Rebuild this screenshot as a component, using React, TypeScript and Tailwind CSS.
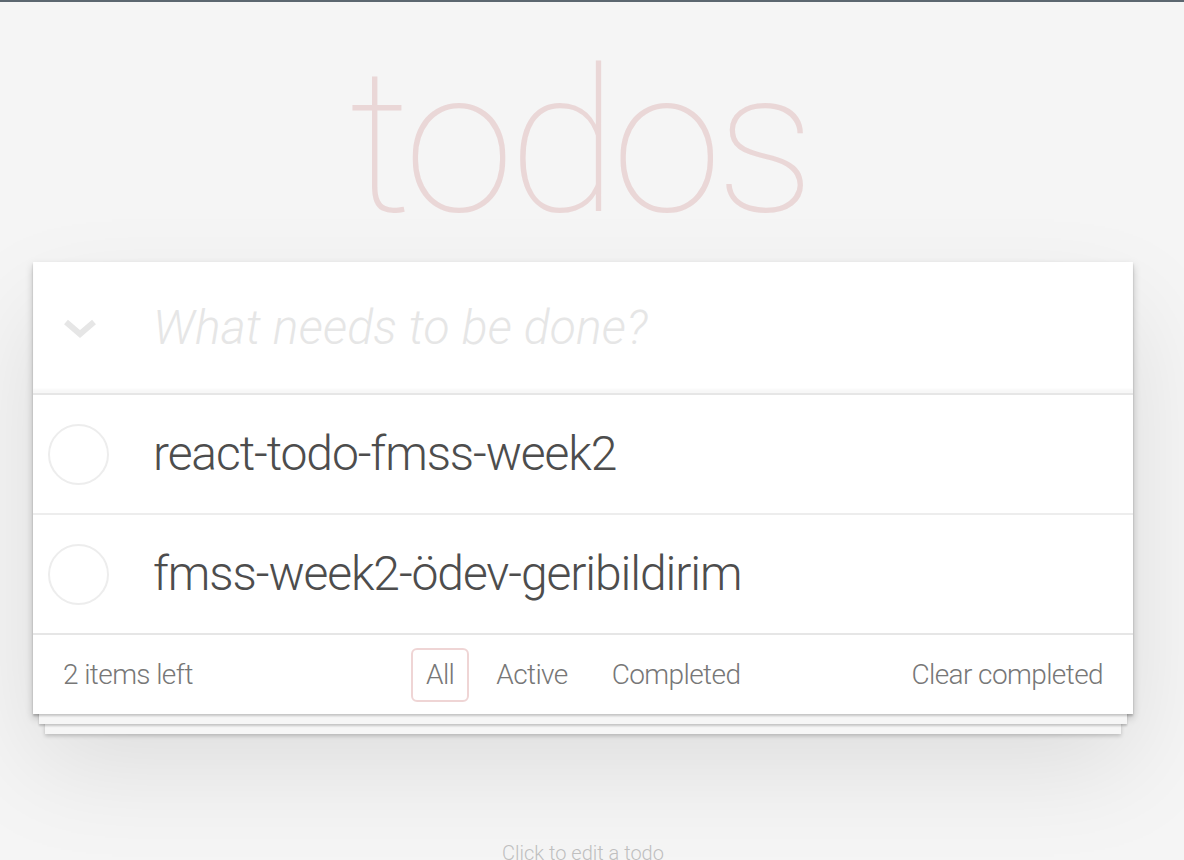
const todos = ["react-todo-fmss-week2", "fmss-week2-ödev-geribildirim"];

const font = "font-['Roboto','Helvetica_Neue',Helvetica,Arial,sans-serif]";

function Chevron() {
  return (
    <svg width="34" height="24" viewBox="0 0 34 24" className="block">
      <polyline
        points="3,5 17,17 31,5"
        fill="none"
        stroke="#e6e6e6"
        strokeWidth="6"
        strokeLinecap="butt"
        strokeLinejoin="miter"
      />
    </svg>
  );
}

export default function App() {
  return (
    <div className={`min-h-screen bg-[#f5f5f5] border-t-2 border-[#5c6770] ${font}`}>
      <div className="ml-[33px] w-[1100px] pt-[41px]">
        <h1 className="h-[200px] mb-[19px] text-center text-[200px] leading-[200px] font-thin tracking-[-6px] text-[rgba(175,47,47,0.15)] pr-[8px]">
          todos
        </h1>

        <section className="bg-white shadow-[0_2px_2px_rgba(0,0,0,0.2),0_16px_0_-6px_#f6f6f6,0_18px_2px_-6px_rgba(0,0,0,0.2),0_32px_0_-12px_#f6f6f6,0_34px_4px_-12px_rgba(0,0,0,0.2),0_4px_8px_0_rgba(0,0,0,0.2),0_50px_100px_0_rgba(0,0,0,0.1)]">
          <header className="h-[131px] flex items-center shadow-[inset_0_-4px_2px_rgba(0,0,0,0.03)]">
            <div className="w-[120px] pl-[30px] pt-[2px]">
              <Chevron />
            </div>
            <span className="text-[48px] italic font-light tracking-[0.2px] text-[#e6e6e6]">
              What needs to be done?
            </span>
          </header>

          <ul className="border-t-2 border-[#e6e6e6]">
            {todos.map((t, i) => (
              <li
                key={t}
                className={`flex items-center ${i === 0 ? "h-[120px] border-b-2 border-[#ededed]" : "h-[118px]"}`}
              >
                <div className="ml-[15px] w-[61px] h-[61px] rounded-full border-2 border-[#ededed]" />
                <span className="ml-[44px] text-[48px] font-light tracking-[-1.1px] text-[#4d4d4d]">{t}</span>
              </li>
            ))}
          </ul>

          <footer className="h-[81px] border-t-2 border-[#e6e6e6] flex items-center px-[30px] pt-[1px] text-[28px] font-light tracking-[-0.6px] text-[#777]">
            <span className="w-[348px]">2 items left</span>
            <div className="flex items-center gap-[12px]">
              <a className="px-[13px] py-[4px] border-2 rounded-[6px] border-[rgba(175,47,47,0.2)]">All</a>
              <a className="px-[13px] py-[4px] border-2 rounded-[6px] border-transparent">Active</a>
              <a className="ml-[2px] px-[13px] py-[4px] border-2 rounded-[6px] border-transparent">Completed</a>
            </div>
            <span className="ml-auto">Clear completed</span>
          </footer>
        </section>

        <p className="mt-[129px] text-center text-[20px] leading-none font-light text-[#bfbfbf]">
          Click to edit a todo
        </p>
      </div>
    </div>
  );
}
